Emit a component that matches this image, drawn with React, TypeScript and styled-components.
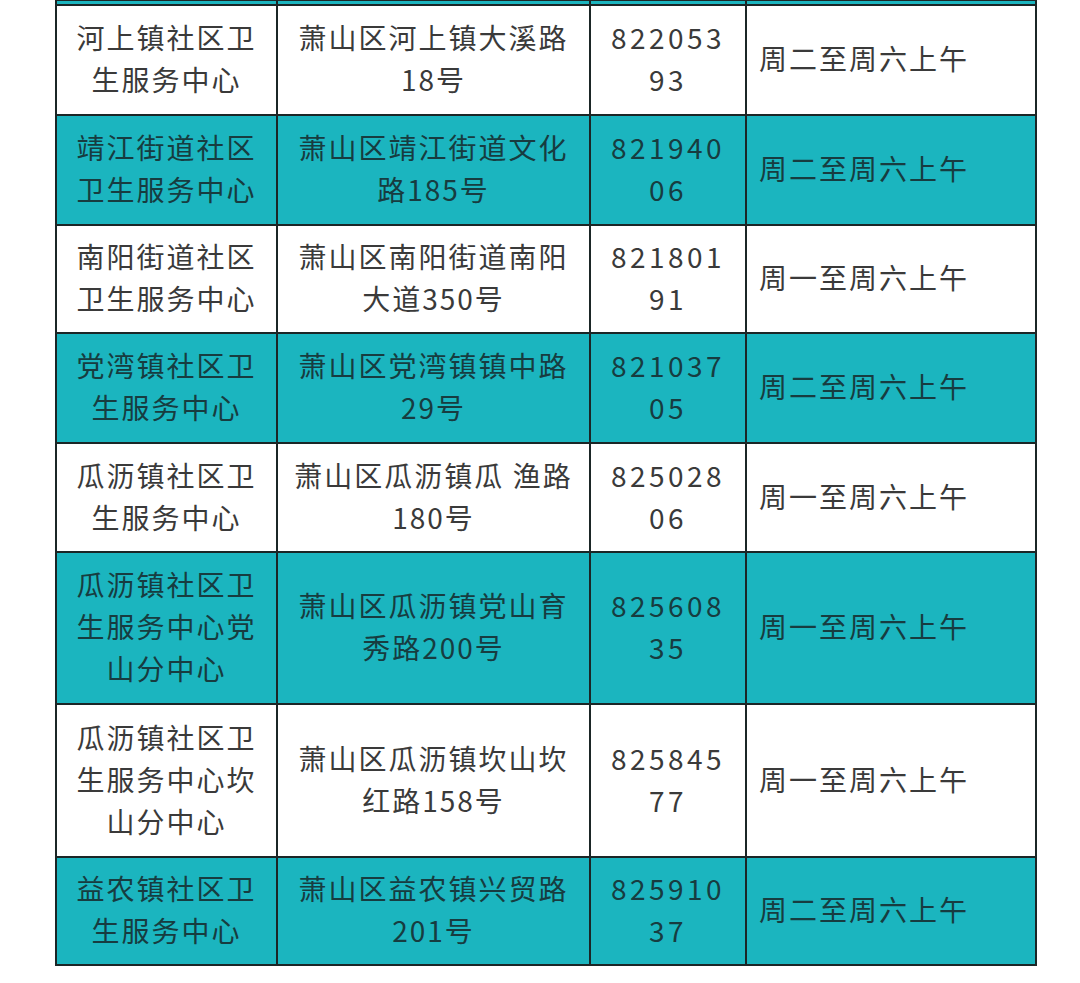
import React from "react";
import styled, { createGlobalStyle } from "styled-components";

const Global = createGlobalStyle`
  html, body { margin: 0; padding: 0; background: #ffffff; }
  body { font-family: "Noto Sans CJK SC", "Noto Sans", sans-serif; }
`;

const Page = styled.div`
  width: 1080px;
  height: 983px;
  overflow: hidden;
  background: #fff;
  padding-left: 55px;
  box-sizing: border-box;
`;

const Table = styled.table`
  border-collapse: collapse;
  table-layout: fixed;
  width: 980px;
  margin-top: -1px;
`;

const Row = styled.tr<{ $teal: boolean }>`
  background: ${(p) => (p.$teal ? "#1bb5bf" : "#ffffff")};
  color: ${(p) => (p.$teal ? "#173c40" : "#3a3a3a")};
`;

const Strip = styled.tr`
  background: #1bb5bf;
  height: 5px;
`;

const Cell = styled.td<{ $left?: boolean; $num?: boolean; $h: number }>`
  border: 2px solid #1b2626;
  height: ${(p) => p.$h}px;
  padding: 0 0 ${(p) => (p.$h > 10 ? "4px" : "0")} ${(p) => (p.$left ? "12px" : "0")};
  box-sizing: border-box;
  text-align: ${(p) => (p.$left ? "left" : "center")};
  vertical-align: middle;
  font-size: 28px;
  font-weight: 400;
  line-height: 42px;
  letter-spacing: ${(p) => (p.$num ? "3.5px" : "2px")};
  white-space: nowrap;
`;

const Line = styled.div``;

type R = { name: string[]; addr: string[]; tel: string[]; time: string; h: number };

const rows: R[] = [
  { name: ["河上镇社区卫", "生服务中心"], addr: ["萧山区河上镇大溪路", "18号"], tel: ["822053", "93"], time: "周二至周六上午", h: 110 },
  { name: ["靖江街道社区", "卫生服务中心"], addr: ["萧山区靖江街道文化", "路185号"], tel: ["821940", "06"], time: "周二至周六上午", h: 110 },
  { name: ["南阳街道社区", "卫生服务中心"], addr: ["萧山区南阳街道南阳", "大道350号"], tel: ["821801", "91"], time: "周一至周六上午", h: 108 },
  { name: ["党湾镇社区卫", "生服务中心"], addr: ["萧山区党湾镇镇中路", "29号"], tel: ["821037", "05"], time: "周二至周六上午", h: 110 },
  { name: ["瓜沥镇社区卫", "生服务中心"], addr: ["萧山区瓜沥镇瓜 渔路", "180号"], tel: ["825028", "06"], time: "周一至周六上午", h: 109 },
  { name: ["瓜沥镇社区卫", "生服务中心党", "山分中心"], addr: ["萧山区瓜沥镇党山育", "秀路200号"], tel: ["825608", "35"], time: "周一至周六上午", h: 152 },
  { name: ["瓜沥镇社区卫", "生服务中心坎", "山分中心"], addr: ["萧山区瓜沥镇坎山坎", "红路158号"], tel: ["825845", "77"], time: "周一至周六上午", h: 153 },
  { name: ["益农镇社区卫", "生服务中心"], addr: ["萧山区益农镇兴贸路", "201号"], tel: ["825910", "37"], time: "周二至周六上午", h: 108 },
];

const Lines = ({ items }: { items: string[] }) => (
  <>
    {items.map((t, i) => (
      <Line key={i}>{t}</Line>
    ))}
  </>
);

export default function App() {
  return (
    <Page>
      <Global />
      <Table>
        <colgroup>
          <col style={{ width: 221 }} />
          <col style={{ width: 313 }} />
          <col style={{ width: 156 }} />
          <col style={{ width: 290 }} />
        </colgroup>
        <tbody>
          <Strip>
            <Cell $h={5} />
            <Cell $h={5} />
            <Cell $h={5} />
            <Cell $h={5} />
          </Strip>
          {rows.map((r, i) => (
            <Row key={i} $teal={i % 2 === 1}>
              <Cell $h={r.h}>
                <Lines items={r.name} />
              </Cell>
              <Cell $h={r.h}>
                <Lines items={r.addr} />
              </Cell>
              <Cell $h={r.h} $num>
                <Lines items={r.tel} />
              </Cell>
              <Cell $h={r.h} $left>
                {r.time}
              </Cell>
            </Row>
          ))}
        </tbody>
      </Table>
    </Page>
  );
}
